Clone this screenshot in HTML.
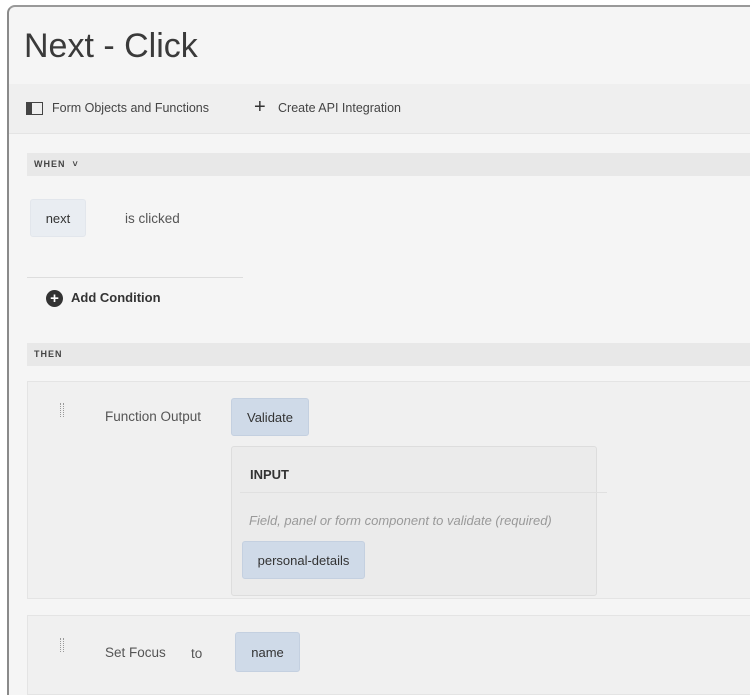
<!DOCTYPE html>
<html><head><style>
*{margin:0;padding:0;box-sizing:border-box}
body{width:750px;height:695px;overflow:hidden;background:#fff;font-family:"Liberation Sans",sans-serif;color:#444;position:relative}
.a{position:absolute}
.chip{position:absolute;background:#cfdae8;border:1px solid #c4d0e0;border-radius:3px;font-size:13px;color:#333;display:flex;align-items:center;justify-content:center}
</style></head><body>
<div class="a" style="left:7px;top:5px;width:743px;height:690px;background:#f5f5f5;border-left:2px solid #8a8a8a;border-top:2px solid #999;border-top-left-radius:8px"></div>
<div class="a" style="left:24px;top:27px;font-size:34px;color:#3a3a3a">Next - Click</div>
<div class="a" style="left:9px;top:84px;width:741px;height:50px;background:#efefef;border-bottom:1px solid #e4e4e4"></div>
<div class="a" style="left:26px;top:102px;width:17px;height:13px;border:1.5px solid #444"></div>
<div class="a" style="left:26px;top:102px;width:6px;height:13px;background:#444"></div>
<div class="a" style="left:52px;top:101px;font-size:12.5px;color:#444">Form Objects and Functions</div>
<div class="a" style="left:254px;top:96px;font-size:20px;color:#333">+</div>
<div class="a" style="left:278px;top:101px;font-size:12.5px;color:#444">Create API Integration</div>
<div class="a" style="left:27px;top:153px;width:723px;height:23px;background:#e8e8e8"></div>
<div class="a" style="left:34px;top:159px;font-size:9px;font-weight:bold;letter-spacing:1px;color:#444">WHEN &nbsp;˅</div>
<div class="chip" style="left:30px;top:199px;width:56px;height:38px;background:#e9edf2;border-color:#e2e6ec">next</div>
<div class="a" style="left:125px;top:211px;font-size:13.5px;color:#555">is clicked</div>
<div class="a" style="left:27px;top:277px;width:216px;height:1px;background:#ddd"></div>
<div class="a" style="left:46px;top:290px;width:17px;height:17px;border-radius:50%;background:#333;color:#fff;font-size:15px;font-weight:bold;line-height:17px;text-align:center">+</div>
<div class="a" style="left:71px;top:290px;font-size:13px;font-weight:bold;color:#333">Add Condition</div>
<div class="a" style="left:27px;top:343px;width:723px;height:23px;background:#e8e8e8"></div>
<div class="a" style="left:34px;top:349px;font-size:9px;font-weight:bold;letter-spacing:1px;color:#444">THEN</div>
<div class="a" style="left:27px;top:381px;width:723px;height:218px;background:#f0f0f0;border:1px solid #e4e4e4;border-right:none"></div>
<div class="a" style="left:60px;top:403px;width:4px;height:14px;border-left:1px dotted #999;border-right:1px dotted #999"></div>
<div class="a" style="left:105px;top:409px;font-size:13.5px;color:#555">Function Output</div>
<div class="chip" style="left:231px;top:398px;width:78px;height:38px">Validate</div>
<div class="a" style="left:231px;top:446px;width:366px;height:150px;background:#ebebeb;border:1px solid #ddd;border-radius:3px"></div>
<div class="a" style="left:240px;top:492px;width:367px;height:1px;background:#e0e0e0"></div>
<div class="a" style="left:250px;top:467px;font-size:13px;font-weight:bold;color:#333">INPUT</div>
<div class="a" style="left:249px;top:513px;font-size:13px;font-style:italic;color:#999">Field, panel or form component to validate (required)</div>
<div class="chip" style="left:242px;top:541px;width:123px;height:38px">personal-details</div>
<div class="a" style="left:27px;top:615px;width:723px;height:80px;background:#f0f0f0;border:1px solid #e4e4e4;border-right:none"></div>
<div class="a" style="left:60px;top:638px;width:4px;height:14px;border-left:1px dotted #999;border-right:1px dotted #999"></div>
<div class="a" style="left:105px;top:645px;font-size:13.5px;color:#555">Set Focus</div>
<div class="a" style="left:191px;top:646px;font-size:13.5px;color:#555">to</div>
<div class="chip" style="left:235px;top:632px;width:65px;height:40px">name</div>
</body></html>
